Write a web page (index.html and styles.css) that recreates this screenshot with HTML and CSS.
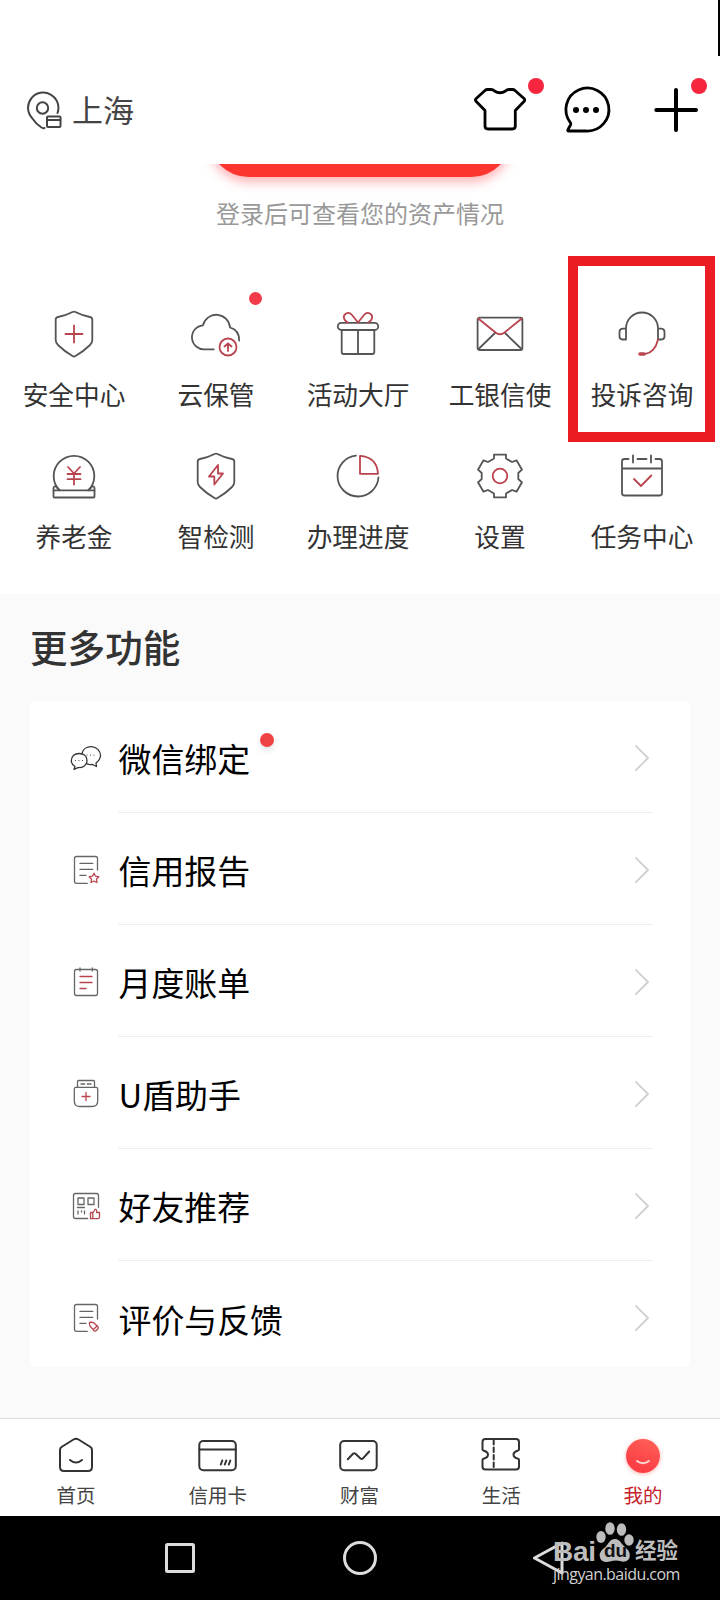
FILE: index.html
```html
<!DOCTYPE html>
<html lang="zh-CN">
<head>
<meta charset="utf-8">
<title>我的</title>
<link rel="stylesheet" href="styles.css">
</head>
<body>
<div class="screen">
  <div class="status"><span class="edge"></span></div>
  <header class="header">
    <div class="place">
      <svg class="pin" viewBox="0 0 36 40"><path d="M30.500 23A15.200 15.200 0 1 0 5 28Q9 34 14.500 37.500Q16 38.500 17.500 38"/><circle cx="15.500" cy="18" r="5.700"/><rect x="20" y="26.500" width="13.500" height="10.500" rx="1"/><path d="M20 30H33.500"/></svg>
      <span>上海</span>
    </div>
    <div class="actions">
      <div class="action"><svg viewBox="0 0 52 52"><path d="M13.500 5.500H17Q19 5.500 20.500 7Q26 10.500 31.500 7Q33 5.500 35 5.500H38.500Q40 5.500 41 6.500L50 14.500Q51.500 15.800 50.200 17.200L41.300 26.500V42Q41.300 45 38.300 45H14Q11 45 11 42V26.500L2 17.200Q.7 15.800 2.200 14.500L11 6.500Q12 5.500 13.500 5.500Z"/></svg><i class="badge"></i></div>
      <div class="action chat"><svg viewBox="0 0 52 52"><path d="M26.300 47H9Q7 47 8 45.500L10.500 41Q11.300 40 10.500 38.800A21.500 21.500 0 1 1 26.300 47Z"/><g class="ink"><circle cx="16" cy="26" r="3"/><circle cx="26" cy="26" r="3"/><circle cx="36" cy="26" r="3"/></g></svg></div>
      <div class="action"><svg class="bold" viewBox="0 0 52 52"><path d="M6.300 26H46M26 6V46"/></svg><i class="badge"></i></div>
    </div>
  </header>

  <section class="account">
    <div class="login"></div>
    <p class="hint">登录后可查看您的资产情况</p>
    <div class="services">
      <div class="service"><svg viewBox="0 0 48 48"><path d="M22.500 2Q24 1.300 25.500 2Q32 5.500 40 7Q42.300 7.500 42.300 9.500V30Q42.300 33 40 35Q34 41 25.500 46Q24 47 22.500 46Q14 41 8 35Q5.700 33 5.700 30V9.500Q5.700 7.500 8 7Q16 5.500 22.500 2Z"/><path class="red" d="M15.500 24H32.500M24 15.500V32.500"/></svg><span>安全中心</span></div>
      <div class="service"><svg viewBox="0 0 48 48"><path d="M21.700 39.300H13A12 12 0 0 1 11 15.300A13.700 13.700 0 0 1 38 17.500Q47.300 20 47.200 30.500"/><g class="red"><circle cx="36" cy="37" r="8.500"/><path d="M36 41V33.500M32.500 36.500L36 33.300L39.500 36.500"/></g></svg><i class="dot"></i><span>云保管</span></div>
      <div class="service"><svg viewBox="0 0 48 48"><rect x="3.800" y="12.800" width="40.400" height="7.200" rx="3.500"/><path d="M7.700 20V42Q7.700 44 9.700 44H38.300Q40.300 44 40.300 42V20M24 20V44"/><path class="red" d="M24 12.500L18 5C14 .5 8 4.500 10.500 9.500Q11.500 11.500 14 12.500M24 12.500L30 5C34 .5 40 4.500 37.500 9.500Q36.500 11.500 34 12.500"/></svg><span>活动大厅</span></div>
      <div class="service"><svg viewBox="0 0 48 48"><rect x="1.600" y="7.700" width="44.800" height="32.300" rx="2"/><path d="M2.500 39L19 23M45.500 39L29 23"/><path class="red" d="M2.500 8.800L19.500 22.500Q24 26 28.500 22.500L45.500 8.800"/></svg><span>工银信使</span></div>
      <div class="service"><svg viewBox="0 0 48 48"><path d="M8 29.500V18.500A16 16 0 0 1 40 18.500V29.500M8 18.700H4.500Q1.500 19 1.500 22V26.500Q1.500 29.300 4.500 29.500H8M40 18.700H43.500Q46.500 19 46.500 22V26.500Q46.500 29.300 43.500 29.500H40"/><path class="red" d="M40 29.500Q37 42.500 27 44"/><path class="red thick" d="M22 44H26"/></svg><span>投诉咨询</span></div>
      <div class="service"><svg viewBox="0 0 48 48"><path d="M9.500 38.300A20.300 20.300 0 1 1 38.500 38.300"/><rect x="3.500" y="38.300" width="41" height="7.200" rx="1"/><path d="M3.500 39V36Q3.500 34.500 5.500 34L9.500 38M44.500 39V36Q44.500 34.500 42.500 34L38.500 38"/><path class="red" d="M18 15L24 21.500L30 15M17.500 22H30.500M17.500 27.200H30.500M24 21.500V32.500"/></svg><span>养老金</span></div>
      <div class="service"><svg viewBox="0 0 48 48"><path d="M22.500 2Q24 1.300 25.500 2Q32 5.500 40 7Q42.300 7.500 42.300 9.500V30Q42.300 33 40 35Q34 41 25.500 46Q24 47 22.500 46Q14 41 8 35Q5.700 33 5.700 30V9.500Q5.700 7.500 8 7Q16 5.500 22.500 2Z"/><path class="red" d="M26 13L17 24.500H22.300V32.500L31 21.500H26Z"/></svg><span>智检测</span></div>
      <div class="service"><svg viewBox="0 0 48 48"><path d="M22 3.600A20.500 20.500 0 1 0 44.500 25.300"/><path class="red" d="M26 3.800Q43 5 44 21.800H26Z"/></svg><span>办理进度</span></div>
      <div class="service"><svg viewBox="0 0 48 48"><path d="M18 2.700H30V6.500L36 10L40.500 8.300L46 17.700L42.300 21V27L46 30.300L40.500 39.700L36 38L30 41.500V45.300H18V41.500L12 38L7.500 39.700L2 30.300L5.700 27V21L2 17.700L7.500 8.300L12 10L18 6.500Z"/><circle class="red" cx="24" cy="24" r="7.300"/></svg><span>设置</span></div>
      <div class="service"><svg viewBox="0 0 48 48"><path d="M10.500 7H6.500Q4 7 4 9.500V41Q4 43.500 6.500 43.500H41.500Q44 43.500 44 41V9.500Q44 7 41.500 7H37.500M19.500 7H28.500M4 16.500H44M15 3.300V10.500M33 3.300V10.500"/><path class="red" d="M16 27L23 34L33.300 23.500"/></svg><span>任务中心</span></div>
      <div class="highlight"></div>
    </div>
  </section>

  <main class="more">
    <h2>更多功能</h2>
    <div class="card">
      <div class="row"><svg class="ico dark" viewBox="0 0 32 32"><path d="M12 11.500C13 7 17 4.500 21.500 4.700C27 5 30.700 9 30.500 14Q30 18 26 21L26.500 24.500L22.500 22.500Q19 23 16.500 21.700M5 24.500L4 27.300L8 25.700C13 26 17 23 17 18.500C17 14 13.500 11.500 9 11.500C4.500 11.500 1.300 14.500 1.300 18.500Q1.300 22.500 5 24.500Z"/><path class="points" d="M5.500 18.500H13M17 13H25"/></svg><div class="line"><span>微信绑定</span><svg class="chev" viewBox="0 0 14 26"><path d="M1 1L13 13L1 25"/></svg><i class="reddot"></i></div></div>
      <div class="row"><svg class="ico" viewBox="0 0 32 32"><path d="M17.300 29.300H6.500Q4.500 29.300 4.500 27.300V4.500Q4.500 2.500 6.500 2.500H25.500Q27.500 2.500 27.500 4.500V16M10 9.400H22.700M10 15.400H22.700M10 21.400H16"/><path class="red" d="M24 19.200L25.500 22.200L28.800 22.700L26.500 25L27 28.500L24 27L21 28.500L21.500 25L19.200 22.700L22.500 22.200Z"/></svg><div class="line"><span>信用报告</span><svg class="chev" viewBox="0 0 14 26"><path d="M1 1L13 13L1 25"/></svg></div></div>
      <div class="row"><svg class="ico" viewBox="0 0 32 32"><rect x="4.500" y="3.500" width="23" height="26" rx="2"/><path d="M10 2V5M22.300 2V5"/><path class="red" d="M10 10.500H22M10 16.500H22M10 22.500H16"/></svg><div class="line"><span>月度账单</span><svg class="chev" viewBox="0 0 14 26"><path d="M1 1L13 13L1 25"/></svg></div></div>
      <div class="row"><svg class="ico" viewBox="0 0 32 32"><path d="M7.500 9V3.500Q7.500 2.500 8.500 2.500H23.500Q24.500 2.500 24.500 3.500V9M11 6H14.700M17.300 6H21M6 9.300H26Q27.700 9.300 27.700 11V23Q27.700 28.500 22 28.500H10Q4.300 28.500 4.300 23V11Q4.300 9.300 6 9.300Z"/><path class="red" d="M12 18.500H20M16 14.500V22.500"/></svg><div class="line"><span>U盾助手</span><svg class="chev" viewBox="0 0 14 26"><path d="M1 1L13 13L1 25"/></svg></div></div>
      <div class="row"><svg class="ico" viewBox="0 0 32 32"><path d="M17.700 28.500H5.500Q3.500 28.500 3.500 26.500V5.500Q3.500 3.500 5.500 3.500H26.500Q28.500 3.500 28.500 5.500V17.300M8 8H14V14.500H8ZM18 8H24V14.500H18ZM7.500 17.500H14.500M8 21V24M11.500 21V22M14.500 21V24"/><path class="red" d="M20.500 22.500H23L25 19.500Q27 19 26.700 22.500H29.500V27Q29.200 28.700 28 28.700H20.500ZM22.800 23V28.500"/></svg><div class="line"><span>好友推荐</span><svg class="chev" viewBox="0 0 14 26"><path d="M1 1L13 13L1 25"/></svg></div></div>
      <div class="row"><svg class="ico" viewBox="0 0 32 32"><path d="M17.300 29.300H6.500Q4.500 29.300 4.500 27.300V4.500Q4.500 2.500 6.500 2.500H25.500Q27.500 2.500 27.500 4.500V17M10 9.400H22.700M10 15.400H22.700M10 21.400H16"/><path class="red" d="M19.500 20.500Q19 22.500 20 24L24 28.700Q25 29.500 26 28.700L28 26.700Q28.700 25.700 28 24.800L24 21Q22 19.800 19.500 20.500ZM23.500 27.500L26.700 24.300"/></svg><div class="line"><span>评价与反馈</span><svg class="chev" viewBox="0 0 14 26"><path d="M1 1L13 13L1 25"/></svg></div></div>
    </div>
  </main>

  <nav class="tabs">
    <div class="tab"><svg viewBox="0 0 40 40"><path d="M17.500 4.500Q20 3 22.500 4.500L34.500 12Q36 13 36 15V32Q36 36 32 36H8Q4 36 4 32V15Q4 13 5.500 12ZM14 25Q20 30 26 25"/></svg><span>首页</span></div>
    <div class="tab"><svg viewBox="0 0 40 40"><rect x="1.300" y="6" width="36.500" height="29.200" rx="4"/><path d="M1.300 14.500H37.800M24.300 25.500L22.800 29.500M28.300 25.500L26.800 29.500M32.300 25.500L30.800 29.500"/></svg><span>信用卡</span></div>
    <div class="tab"><svg viewBox="0 0 40 40"><rect x="1.200" y="6" width="36.500" height="29.200" rx="4"/><path d="M8.800 24.300L14 18.800Q15.200 17.700 16.500 18.800L21.500 23.500Q22.800 24.500 24 23.300L30.200 16.500"/></svg><span>财富</span></div>
    <div class="tab"><svg viewBox="0 0 40 40"><path d="M4.500 4H35Q38 4 38 7V14.500Q38 15.500 36.500 15.700Q32.500 17 32.500 19.500Q32.500 22.500 36.500 23.500Q38 23.800 38 25V31.500Q38 34.500 35 34.500H4.500Q1.500 34.500 1.500 31.500V25Q1.500 23.800 3 23.500Q7 22.500 7 19.500Q7 17 3 15.700Q1.500 15.500 1.500 14.500V7Q1.500 4 4.500 4Z"/><path d="M12.700 5V34" stroke-dasharray="4.500 3"/></svg><span>生活</span></div>
    <div class="tab current"><b class="face"><svg viewBox="0 0 34 34"><path d="M11 22Q17 26.500 23 22"/></svg></b><span>我的</span></div>
  </nav>

  <footer class="keys">
    <svg viewBox="0 0 34 34"><rect x="3.500" y="3.500" width="27" height="27" rx="1"/></svg>
    <svg viewBox="0 0 34 34"><circle cx="17" cy="17" r="15.500"/></svg>
    <svg class="back" viewBox="0 0 34 34"><path d="M3.500 17L31 2V32Z"/></svg>
    <div class="mark">
      <div class="brand"><span class="bai">Bai</span><span class="paw"><svg viewBox="0 0 38 42"><ellipse cx="5" cy="15" rx="4.700" ry="6"/><ellipse cx="14" cy="6.500" rx="4.700" ry="6.300"/><ellipse cx="25.500" cy="7.500" rx="4.700" ry="6.300"/><ellipse cx="33" cy="18" rx="4.700" ry="5.700"/><path d="M19 17Q23 17 26 22L32 28Q35 32 33 37Q30 41 24 39Q19 38 14 39.500Q7 41 4.500 37Q2 31 7 27Q10 25 12.500 21Q15 17 19 17Z"/></svg><em>du</em></span><span class="jy">经验</span></div>
      <div class="url">jingyan.baidu.com</div>
    </div>
  </footer>
</div>
</body>
</html>
```
FILE: styles.css
```css
* { box-sizing: border-box; }
body {
  margin: 0;
  background: #fff;
  font-family: "Noto Sans CJK SC", sans-serif;
  color: #333;
}
svg { display: block; fill: none; stroke-linecap: round; stroke-linejoin: round; }
.screen { width: 720px; height: 1600px; display: flex; flex-direction: column; overflow: hidden; }

.status { height: 56px; display: flex; justify-content: flex-end; }
.edge { width: 2px; background: #000; }

.header { height: 108px; padding: 0 18px 0 27px; display: flex; align-items: center; justify-content: space-between; }
.place { display: flex; align-items: center; gap: 9px; font-size: 31px; line-height: 44px; color: #444; }
.place span { margin-top: -2px; }
.pin { width: 36px; height: 40px; stroke: #444; stroke-width: 2; }
.actions { display: flex; gap: 36px; }
.action { position: relative; width: 52px; height: 52px; }
.chat { margin: 0 2px 0 -2px; }
.action svg { width: 52px; height: 52px; stroke: #000; stroke-width: 2.8; }
.action .bold { stroke-width: 4; }
.ink { fill: #000; stroke: none; }
.badge { position: absolute; right: -18px; top: -6px; width: 16px; height: 16px; border-radius: 50%; background: #f7263f; }
.action:last-child .badge { right: -5px; }

.account { height: 430px; overflow: hidden; }
.login { width: 304px; height: 82px; margin: -69px auto 0; border-radius: 41px; background: #fc362e; box-shadow: 0 5px 11px rgba(252, 54, 60, .38); }
.hint { margin: 18px 0 0; font-size: 24px; line-height: 36px; text-align: center; color: #999; }
.services { position: relative; width: 710px; margin: 79px 0 0 3px; display: grid; grid-template-columns: repeat(5, 142px); grid-auto-rows: 142px; }
.service { position: relative; display: flex; flex-direction: column; align-items: center; gap: 17px; font-size: 25.7px; line-height: 38px; color: #333; }
.service svg { width: 48px; height: 48px; stroke: #555; stroke-width: 1.8; overflow: visible; }
.service .red, .ico .red { stroke: #b9444e; }
.service .thick { stroke-width: 3.5; }
.dot { position: absolute; left: 104px; top: -18.500px; width: 13px; height: 13px; border-radius: 50%; background: #f23a4a; }
.highlight { position: absolute; left: 565px; top: -54px; width: 147px; height: 186px; border: 10px solid #ec1c24; }

.more { height: 824px; padding: 0 30px; background: #fafafa; }
.more h2 { margin: 0; padding: 25px 0 0; height: 107px; font-size: 37.600px; line-height: 54px; font-weight: 500; color: #333; }
.card { height: 666px; background: #fff; border-radius: 4px; }
.row { height: 112px; padding: 0 37px 0 40px; display: flex; align-items: center; gap: 16px; }
.row:last-child { height: 106px; }
.ico { width: 32px; height: 32px; margin-top: 2px; stroke: #666; stroke-width: 1.3; }
.ico.dark { stroke: #333; }
.ico .points { stroke-width: 1.1; stroke-dasharray: 0 3.500; }
.line { position: relative; flex: 1; height: 112px; display: flex; align-items: center; justify-content: space-between; padding-right: 4px; border-bottom: 1px solid #eee; font-size: 32.900px; line-height: 48px; color: #000; }
.line span { margin: 3px 0 0 .5px; }
.row:last-child .line { height: 106px; border: 0; padding-top: 6px; }
.row:last-child .ico { margin-top: 8px; }
.chev { width: 14px; height: 26px; margin-top: 2px; stroke: #d2d2d2; stroke-width: 1.8; }
.reddot { position: absolute; left: 142px; top: 32px; width: 14px; height: 14px; border-radius: 50%; background: #f04444; box-shadow: 0 4px 6px rgba(0, 0, 0, .1); }

.tabs { height: 98px; border-top: 1px solid #ddd; background: #fff; padding: 16px 6px 0 5px; display: grid; grid-template-columns: repeat(5, 1fr); }
.tab { display: flex; flex-direction: column; align-items: center; gap: 6px; font-size: 19.500px; line-height: 28px; color: #444; }
.tab svg { width: 40px; height: 40px; stroke: #333; stroke-width: 2; }
.face { width: 34px; height: 34px; margin: 4px 0 2px; border-radius: 50%; background: linear-gradient(200deg, #ff6258, #fb4045 75%); box-shadow: 0 1px 4px rgba(255, 60, 60, .4); }
.tab .face svg { width: 34px; height: 34px; stroke: #ffd5d5; }
.current { color: #c5222b; }

.keys { position: relative; height: 84px; background: #000; display: flex; align-items: center; justify-content: center; gap: 146px; }
.keys > svg { width: 34px; height: 34px; stroke: #ddd; stroke-width: 3; }
.keys > .back { margin: 0 -8px 0 8px; }
.mark { position: absolute; left: 553px; top: 6px; color: #bdbdbd; }
.brand { display: flex; align-items: flex-start; height: 43px; }
.bai { width: 43px; padding-top: 14px; font: bold 28px/32px "Liberation Sans", sans-serif; letter-spacing: -.3px; }
.paw { position: relative; width: 38px; height: 42px; }
.paw svg { width: 38px; height: 42px; fill: #bdbdbd; }
.paw em { position: absolute; left: 8px; top: 18px; font: bold 19px/22px "Liberation Sans", sans-serif; color: #111; }
.jy { padding: 11px 0 0 1px; font-size: 21.500px; line-height: 32px; font-weight: 700; }
.url { font: 16px/20px "Open Sans", sans-serif; letter-spacing: -.55px; margin-top: -1px; white-space: nowrap; color: #d0d0d0; }
```
